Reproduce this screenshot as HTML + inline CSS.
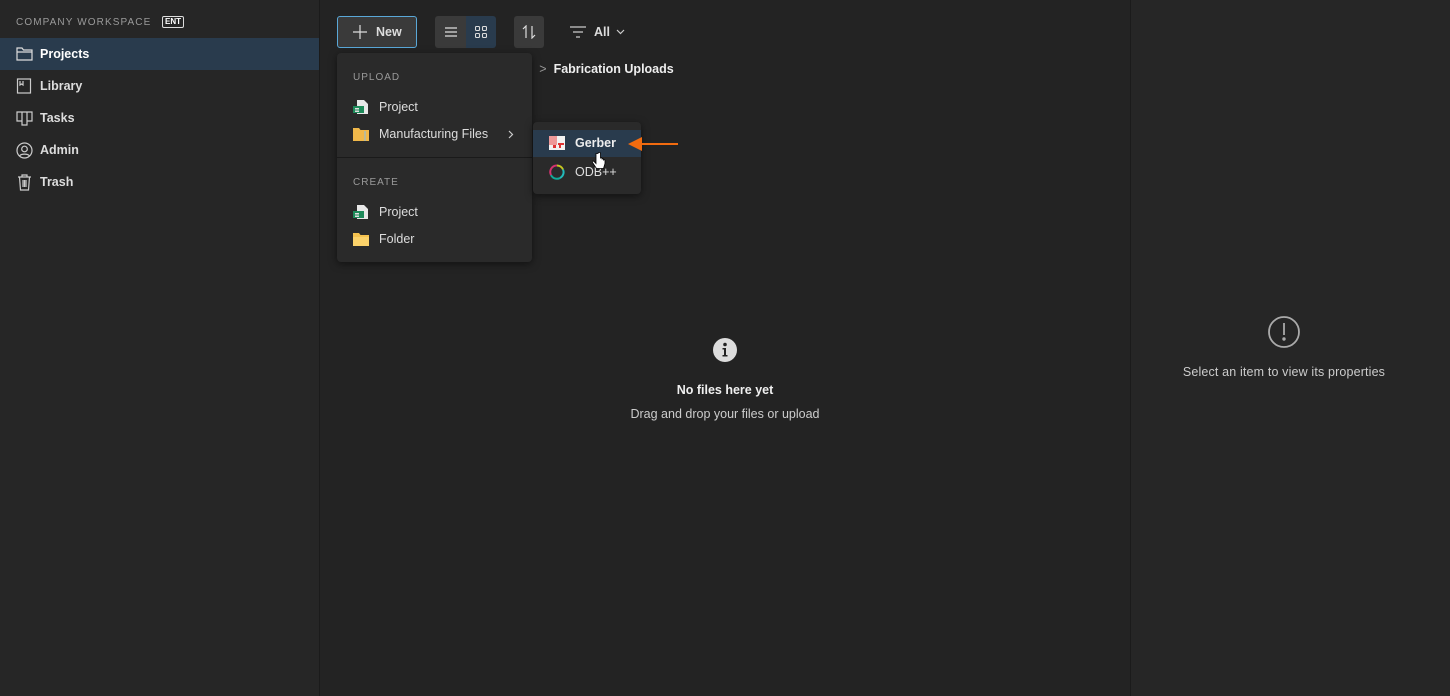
<!DOCTYPE html>
<html><head><meta charset="utf-8"><style>
*{box-sizing:border-box;margin:0;padding:0}
body{width:1450px;height:696px;background:#232323;font-family:"Liberation Sans",sans-serif;color:#e6e6e6;position:relative;overflow:hidden;font-size:12px}
.abs{position:absolute}
#side{left:0;top:0;width:320px;height:696px;background:#262626;border-right:1px solid #1b1b1b}
#right{left:1130px;top:0;width:320px;height:696px;background:#262626;border-left:1px solid #1b1b1b}
.nav{position:absolute;left:0;width:319px;height:32px;display:flex;align-items:center;padding-left:16px;font-size:12.5px;font-weight:bold;color:#ddd}
.nav svg{margin-right:7px}
.btn{position:absolute;top:16px;height:32px;border-radius:3px;background:#3a3a3a}
.menu{position:absolute;background:#2a2a2a;border-radius:4px;box-shadow:0 2px 8px rgba(0,0,0,.5)}
.mi{position:absolute;left:16px;display:flex;align-items:center;font-size:12.5px;color:#ddd}
.mi svg{margin-right:10px}
.hd{position:absolute;left:16px;font-size:10px;letter-spacing:1px;color:#9a9a9a}
</style></head><body>
<div id="side" class="abs">
 <div class="abs" style="left:16px;top:17px;font-size:10px;letter-spacing:1.1px;color:#9a9a9a">COMPANY WORKSPACE</div>
 <div class="abs" style="left:162px;top:16px;border:1px solid #ddd;border-radius:2px;font-size:8px;font-weight:bold;padding:0 2px;line-height:10px;color:#fff">ENT</div>
 <div class="nav" style="top:38px;background:#293b4d;color:#fff"><svg width="17" height="14" viewBox="0 0 17 14" fill="none" stroke="#ddd" stroke-width="1.2"><path d="M1 1h5l1.5 2H16v10H1z M1 5h15"/></svg>Projects</div>
 <div class="nav" style="top:70px"><svg width="17" height="16" viewBox="0 0 17 16" fill="none" stroke="#ccc" stroke-width="1.2"><rect x="1.5" y="1" width="13" height="14"/><path d="M4 3v4l1.5-1 1.5 1V3"/></svg>Library</div>
 <div class="nav" style="top:102px"><svg width="17" height="16" viewBox="0 0 17 16" fill="none" stroke="#ccc" stroke-width="1.2"><path d="M1 2h15v9h-5v4H6v-4H1z M6 2v9 M11 2v9"/></svg>Tasks</div>
 <div class="nav" style="top:134px"><svg width="17" height="17" viewBox="0 0 17 17" fill="none" stroke="#ccc" stroke-width="1.2"><circle cx="8.5" cy="8.5" r="7.5"/><circle cx="8.5" cy="7" r="2.8"/><path d="M3.5 14c1.5-2.5 8.5-2.5 10 0"/></svg>Admin</div>
 <div class="nav" style="top:166px"><svg width="17" height="17" viewBox="0 0 17 17" fill="none" stroke="#ccc" stroke-width="1.2"><path d="M2 3h13 M6 3V1h5v2 M3.5 3l1 13h8l1-13 M7 6v7 M8.5 6v7 M10 6v7"/></svg>Trash</div>
</div>
<div class="btn" style="left:337px;width:80px;border:1px solid #5aa8d8;background:#3a3a3a;display:flex;align-items:center;padding-left:14px;font-size:12.5px;font-weight:bold;color:#ddd"><svg width="16" height="16" viewBox="0 0 16 16" stroke="#ddd" stroke-width="1.2"><path d="M8 1v14M1 8h14"/></svg><span style="margin-left:8px">New</span></div>
<div class="btn" style="left:435px;width:31px;border-radius:3px 0 0 3px;display:flex;align-items:center;justify-content:center"><svg width="12" height="10" stroke="#ddd" stroke-width="1.2"><path d="M0 1h12M0 5h12M0 9h12"/></svg></div>
<div class="btn" style="left:466px;width:30px;border-radius:0 3px 3px 0;background:#293b4d;display:flex;align-items:center;justify-content:center"><svg width="12" height="12" fill="none" stroke="#ddd" stroke-width="1.1"><rect x=".5" y=".5" width="4" height="4" rx="1"/><rect x="7.5" y=".5" width="4" height="4" rx="1"/><rect x=".5" y="7.5" width="4" height="4" rx="1"/><rect x="7.5" y="7.5" width="4" height="4" rx="1"/></svg></div>
<div class="btn" style="left:514px;width:30px;display:flex;align-items:center;justify-content:center"><svg width="16" height="14" fill="none" stroke="#ddd" stroke-width="1.2"><path d="M5 13V1L2 4M11 1v12l3-3"/></svg></div>
<div class="abs" style="left:570px;top:25px;display:flex;align-items:center;font-weight:bold;font-size:12.5px;color:#ddd"><svg width="16" height="12" stroke="#ccc" stroke-width="1.2"><path d="M0 1h16M3 6h10M6 11h4"/></svg><span style="margin-left:8px">All</span><svg style="margin-left:6px" width="9" height="6" fill="none" stroke="#ccc" stroke-width="1.2"><path d="M1 1l3.5 3.5L8 1"/></svg></div>
<div class="abs" style="left:524px;top:62px;font-size:12.5px;color:#eee;white-space:nowrap"><span style="color:#c87838">s</span><span style="color:#999;margin-left:9px">&gt;</span><span style="font-weight:bold;margin-left:7px">Fabrication Uploads</span></div>

<div class="menu" style="left:337px;top:53px;width:195px;height:209px">
 <div class="hd" style="top:19px">UPLOAD</div>
 <div class="mi" style="top:46px"><svg width="16" height="16"><path d="M4 1h7l4 4v10H4z" fill="#e8e8e8"/><rect x="0" y="7" width="11" height="7" fill="#1e8a5a"/><rect x="2" y="9" width="4" height="1.5" fill="#ddd"/><rect x="2" y="11.5" width="4" height="1.5" fill="#ddd"/></svg>Project</div>
 <div class="mi" style="top:74px"><svg width="16" height="14"><path d="M0 1h6l1.5 2H16v11H0z" fill="#f0b84a"/><rect x="11" y="4" width="2" height="10" fill="#bb9"/></svg>Manufacturing Files</div>
 <svg class="abs" style="left:171px;top:77px" width="6" height="9" fill="none" stroke="#ccc" stroke-width="1.2"><path d="M1 1l3.5 3.5L1 8"/></svg>
 <div class="abs" style="left:0;top:104px;width:195px;height:1px;background:#1a1a1a"></div>
 <div class="hd" style="top:124px">CREATE</div>
 <div class="mi" style="top:151px"><svg width="16" height="16"><path d="M4 1h7l4 4v10H4z" fill="#e8e8e8"/><rect x="0" y="7" width="11" height="7" fill="#1e8a5a"/><rect x="2" y="9" width="4" height="1.5" fill="#ddd"/><rect x="2" y="11.5" width="4" height="1.5" fill="#ddd"/></svg>Project</div>
 <div class="mi" style="top:179px"><svg width="16" height="14"><path d="M0 1h6l1.5 2H16v11H0z" fill="#f5c24f"/><path d="M0 5h16v9H0z" fill="#fbd26a"/></svg>Folder</div>
</div>
<div class="menu" style="left:533px;top:122px;width:108px;height:72px">
 <div class="abs" style="left:0;top:8px;width:108px;height:27px;background:#293b4d"></div>
 <div class="mi" style="top:14px;left:16px;font-weight:bold;color:#eee"><svg width="16" height="14"><rect x="0" y="0" width="16" height="14" fill="#f2f2f2"/><rect x="0" y="0" width="8" height="9" fill="#e99"/><rect x="4" y="9" width="3" height="3" fill="#d33"/><rect x="9" y="7" width="6" height="2" fill="#d33"/><rect x="10" y="9" width="2" height="3" fill="#d33"/></svg>Gerber</div>
 <div class="mi" style="top:42px;left:16px"><svg width="16" height="16" fill="none" stroke-width="2"><path d="M8 1.5a6.5 6.5 0 0 1 6 4" stroke="#c8c820"/><path d="M14 5.5a6.5 6.5 0 0 1-3 8.5" stroke="#2bb"/><path d="M11 14a6.5 6.5 0 0 1-9-3" stroke="#1a9"/><path d="M2 11a6.5 6.5 0 0 1 6-9.5" stroke="#d2326e"/></svg>ODB++</div>
 <svg class="abs" style="left:59px;top:30px" width="14" height="20"><path d="M4 1.5v10l-2-2c-1-1-2.5 0-1.5 1l4 6h7l1.5-5v-3c0-1-1.5-1-1.5 0v-1c0-1-1.5-1-1.5 0v-1c0-1-1.5-1-1.5 0V1.5c0-1.5-2.5-1.5-2.5 0z" fill="#fff" stroke="#000" stroke-width=".8"/></svg>
</div>
<svg class="abs" style="left:628px;top:137px" width="50" height="14"><path d="M14 7h36" stroke="#f26b0f" stroke-width="2"/><path d="M0 7l14-7v14z" fill="#f26b0f"/></svg>

<svg class="abs" style="left:713px;top:338px" width="24" height="24"><circle cx="12" cy="12" r="12" fill="#ddd"/><circle cx="12" cy="6.5" r="1.8" fill="#232323"/><path d="M9.5 10h3.5v7h1.5v1.5h-5V17h1.5v-5.5h-1.5z" fill="#232323"/></svg>
<div class="abs" style="left:580px;top:383px;width:290px;text-align:center;font-weight:bold;color:#f0f0f0;font-size:12.5px">No files here yet</div>
<div class="abs" style="left:580px;top:407px;width:290px;text-align:center;color:#ccc;font-size:12.5px">Drag and drop your files or upload</div>

<div id="right" class="abs">
 <svg class="abs" style="left:137px;top:316px" width="32" height="32" fill="none" stroke="#aaa" stroke-width="1.8"><circle cx="16" cy="16" r="15"/><path d="M16 7v12"/><circle cx="16" cy="23" r=".8" fill="#aaa"/></svg>
 <div class="abs" style="left:0;top:365px;width:306px;text-align:center;color:#ccc;font-size:12.5px;letter-spacing:.15px">Select an item to view its properties</div>
</div>
</body></html>
